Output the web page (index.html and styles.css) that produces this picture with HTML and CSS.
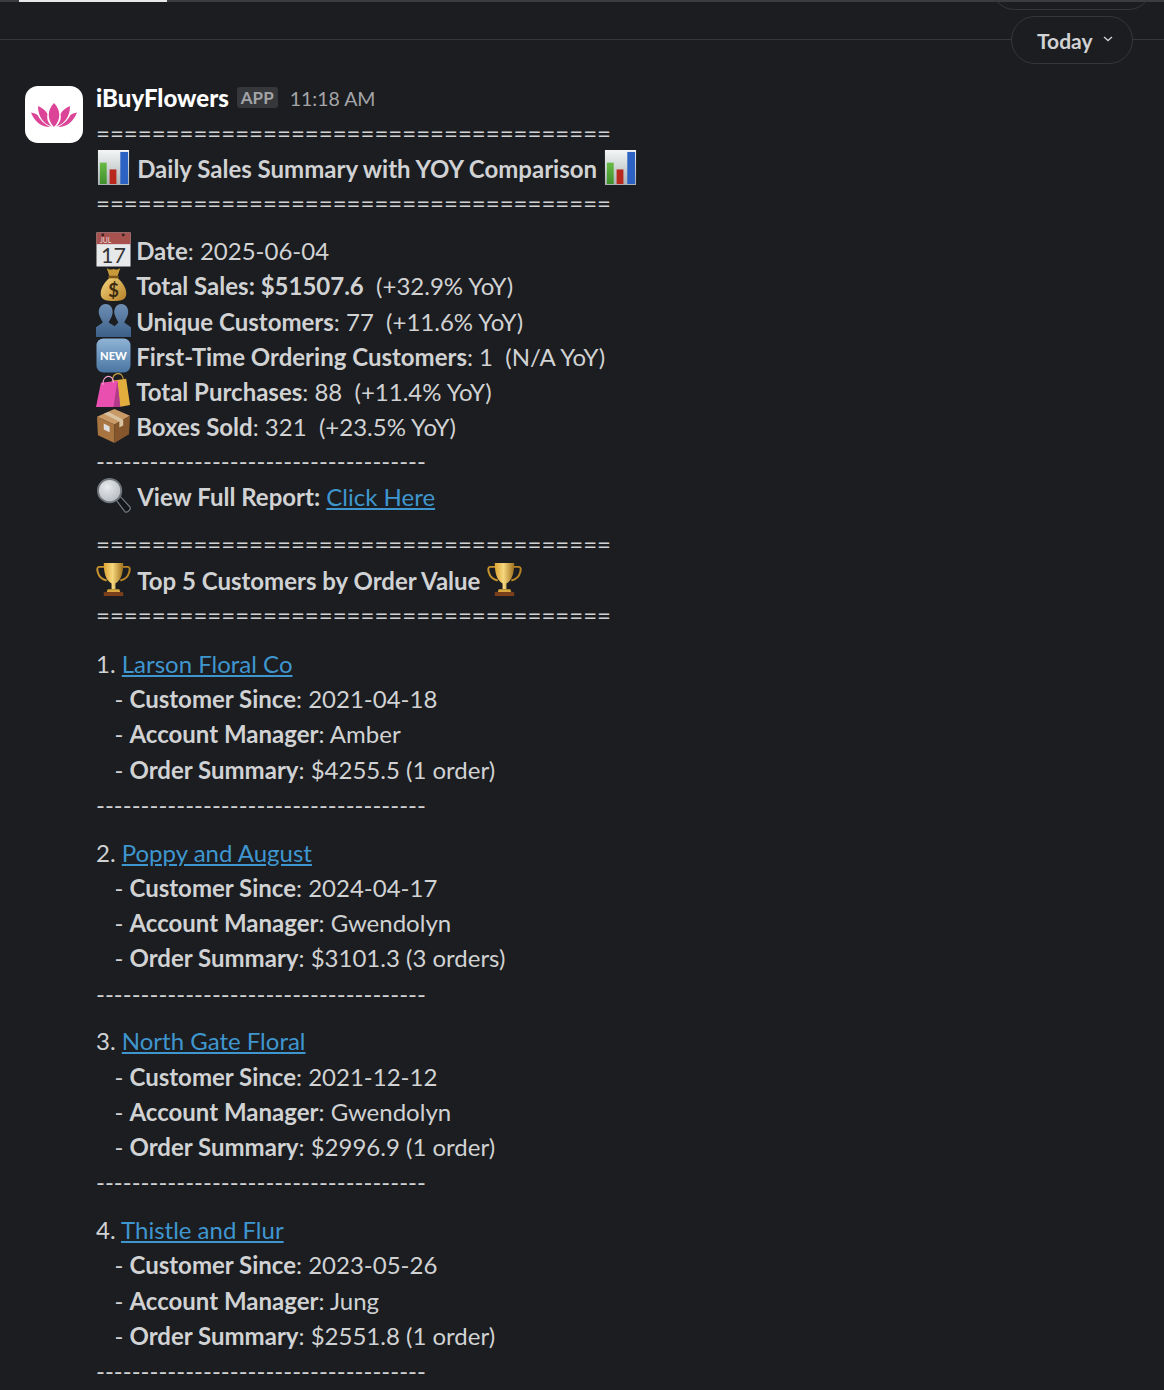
FILE: index.html
```html
<!DOCTYPE html>
<html lang="en">
<head>
    <meta charset="UTF-8">
    <title>iBuyFlowers</title>
    <link rel="stylesheet" href="styles.css">
</head>
<body>
    <svg class="sprites" width="0" height="0" aria-hidden="true">
        <defs>
            <linearGradient id="paper" x1="0" y1="0" x2="0" y2="1"><stop offset="0" stop-color="#f4f6f6"/><stop offset="1" stop-color="#aab2b4"/></linearGradient>
            <linearGradient id="green" x1="0" y1="0" x2="0" y2="1"><stop offset="0" stop-color="#69bb45"/><stop offset="1" stop-color="#3e8f2c"/></linearGradient>
            <linearGradient id="bag" x1="0" y1="0" x2="1" y2="1"><stop offset="0" stop-color="#f4d67e"/><stop offset="1" stop-color="#b57f26"/></linearGradient>
            <linearGradient id="bust" x1="0" y1="0" x2="0" y2="1"><stop offset="0" stop-color="#6f8fb4"/><stop offset="1" stop-color="#3b5f88"/></linearGradient>
            <linearGradient id="newbg" x1="0" y1="0" x2="0" y2="1"><stop offset="0" stop-color="#8fb3d6"/><stop offset="1" stop-color="#4a76a3"/></linearGradient>
            <linearGradient id="cup" x1="0" y1="0" x2="1" y2="0"><stop offset="0" stop-color="#dca534"/><stop offset=".45" stop-color="#f6d77e"/><stop offset="1" stop-color="#a0701c"/></linearGradient>
            <radialGradient id="glass" cx=".4" cy=".35" r=".7"><stop offset="0" stop-color="#e9ebed"/><stop offset="1" stop-color="#b4b9be"/></radialGradient>

            <symbol id="e-chart" viewBox="0 0 36 36">
                <rect x="2" y="0" width="32" height="36" fill="url(#paper)"/>
                <rect x="4" y="13" width="7" height="22" fill="url(#green)"/>
                <rect x="14" y="20" width="7" height="15" fill="#b8281d"/>
                <rect x="25" y="2" width="8" height="33" fill="#2b62c4"/>
            </symbol>
            <symbol id="e-cal" viewBox="0 0 36 36">
                <rect x="0.500" y="0.500" width="35" height="35" fill="#e6e8e9"/>
                <rect x="0.500" y="0.500" width="35" height="12" fill="#a8524f"/>
                <circle cx="7" cy="3" r="1.500" fill="#3a2422"/>
                <circle cx="28" cy="3" r="1.500" fill="#3a2422"/>
                <text x="4" y="11" class="e-cal-month">JUL</text>
                <text x="18" y="32" text-anchor="middle" class="e-cal-day">17</text>
            </symbol>
            <symbol id="e-money" viewBox="0 0 36 36">
                <path d="M11 1c3 2 4 2 7 1 3 1 4 1 7-1l-3 9h-8z" fill="#c99a3a"/>
                <path d="M14 11h8c6 5 10 12 9 18-1 5-6 6-13 6S6 34 5 29c-1-6 3-13 9-18z" fill="url(#bag)"/>
                <rect x="12.500" y="9" width="11" height="2.500" rx="1" fill="#7d5518"/>
                <text x="18" y="31" text-anchor="middle" class="e-dollar">$</text>
            </symbol>
            <symbol id="e-people" viewBox="0 0 36 36">
                <path d="M26 1c5 0 8 5 7 10-1 4-3 7-4 9l7 5v10H18V25l5-5c-1-2-3-5-4-9-1-5 2-10 7-10z" fill="url(#bust)"/>
                <path d="M10 1c5 0 8 5 7 10-1 4-3 7-4 9l8 5v10H0V25l7-5c-1-2-3-5-4-9-1-5 2-10 7-10z" fill="url(#bust)"/>
            </symbol>
            <symbol id="e-new" viewBox="0 0 36 36">
                <rect x="0.500" y="0.500" width="35" height="35" rx="7" fill="url(#newbg)"/>
                <text x="18" y="23" text-anchor="middle" class="e-new-label">NEW</text>
            </symbol>
            <symbol id="e-bags" viewBox="0 0 36 36">
                <path d="M16 8 31 6l4 27-11 2z" fill="#e3ad3d"/>
                <path d="M17 8c0-9 10-10 11-2" fill="none" stroke="#caa23f" stroke-width="1.200"/>
                <path d="M5 10l17-2 3 27H0z" fill="#e84fae"/>
                <path d="M7 12c0-11 11-11 11-2" fill="none" stroke="#f3a6d6" stroke-width="1.200"/>
                <path d="M22 8l3 27-7 0z" fill="#b03a88"/>
            </symbol>
            <symbol id="e-box" viewBox="0 0 36 36">
                <path d="M1 9 19 1l16 7-16 9z" fill="#c99a66"/>
                <path d="M1 9l18 8v19L2 28z" fill="#a87440"/>
                <path d="M19 17l16-9-1 19-15 9z" fill="#85552b"/>
                <path d="M8 6 24 14v6l4-2v-6L13 4z" fill="#d8c2a0"/>
                <path d="M8 16l6 3v6l-6-3z" fill="#dedede"/>
            </symbol>
            <symbol id="e-glass" viewBox="0 0 36 36">
                <path d="M21 23l4-4 10 11c1 2-2 6-5 5z" fill="#14161a" stroke="#7a7f85" stroke-width="1.200"/>
                <circle cx="14" cy="13" r="12" fill="url(#glass)" stroke="#6f757b" stroke-width="2"/>
            </symbol>
            <symbol id="e-cup" viewBox="0 0 36 36">
                <path d="M9 5H3c-2 0-2 3-1 6 1 4 5 7 9 8" fill="none" stroke="#c9952f" stroke-width="2"/>
                <path d="M27 5h6c2 0 2 3 1 6-1 4-5 7-9 8" fill="none" stroke="#b98424" stroke-width="2"/>
                <path d="M8 1h20c0 10-2 18-8 21v6h-4v-6C10 19 8 11 8 1z" fill="url(#cup)"/>
                <path d="M12 28h12l1 3H11z" fill="#d9a83f"/>
                <rect x="8" y="31" width="20" height="4" fill="#7c3f1c"/>
            </symbol>
            <g id="petals">
                <path d="M7 3C12 5 15 8 16.500 11 15.500 16 17 20 21 23.500 12 21 7 13 7 3z"/>
                <path d="M0 9.500C3 10 5 11 6.500 12 9 17 13 21 19 24 10 24 3 18 0 9.500z"/>
            </g>
        </defs>
    </svg>

    <div class="app">
        <div class="tabstrip"><span class="tab-active"></span></div>

        <!-- date dividers -->
        <div class="date-head">
            <span class="pill-prev"></span>
            <div class="date-rule"></div>
            <button class="pill-today">Today
                <svg class="chev" viewBox="0 0 10 6"><path d="M1 1l4 3.600L9 1" fill="none" stroke="currentColor" stroke-width="1.300"/></svg>
            </button>
        </div>

        <div class="message">
            <div class="avatar">
                <svg viewBox="0 0 46 24" width="46" height="24" fill="#dc4597">
                    <path d="M23 0C30 7 30 17 23 24 16 17 16 7 23 0z"/>
                    <use href="#petals"/>
                    <use href="#petals" transform="matrix(-1 0 0 1 46 0)"/>
                </svg>
            </div>
            <div class="body">
                <div class="meta">
                    <span class="sender">iBuyFlowers</span>
                    <span class="badge">APP</span>
                    <span class="time">11:18 AM</span>
                </div>

                <section class="block gap-s">
                    <div class="line">=====================================</div>
                    <div class="line"><svg class="emoji"><use href="#e-chart"/></svg> <b>Daily Sales Summary with YOY Comparison</b> <svg class="emoji"><use href="#e-chart"/></svg></div>
                    <div class="line">=====================================</div>
                </section>

                <section class="block">
                    <div class="line stat"><svg class="emoji"><use href="#e-cal"/></svg> <b>Date</b>: 2025-06-04</div>
                    <div class="line stat"><svg class="emoji"><use href="#e-money"/></svg> <b>Total Sales: $51507.6</b>  (+32.9% YoY)</div>
                    <div class="line stat"><svg class="emoji"><use href="#e-people"/></svg> <b>Unique Customers</b>: 77  (+11.6% YoY)</div>
                    <div class="line stat"><svg class="emoji"><use href="#e-new"/></svg> <b>First-Time Ordering Customers</b>: 1  (N/A YoY)</div>
                    <div class="line stat"><svg class="emoji"><use href="#e-bags"/></svg> <b>Total Purchases</b>: 88  (+11.4% YoY)</div>
                    <div class="line stat"><svg class="emoji"><use href="#e-box"/></svg> <b>Boxes Sold</b>: 321  (+23.5% YoY)</div>
                    <div class="line">-------------------------------------</div>
                    <div class="line"><svg class="emoji"><use href="#e-glass"/></svg> <b>View Full Report:</b> <a href="#">Click Here</a></div>
                </section>

                <section class="block gap-l">
                    <div class="line">=====================================</div>
                    <div class="line"><svg class="emoji"><use href="#e-cup"/></svg> <b>Top 5 Customers by Order Value</b> <svg class="emoji"><use href="#e-cup"/></svg></div>
                    <div class="line">=====================================</div>
                </section>

                <section class="block">
                    <div class="line">1. <a href="#">Larson Floral Co</a></div>
                    <div class="line">   - <b>Customer Since</b>: 2021-04-18</div>
                    <div class="line">   - <b>Account Manager</b>: Amber</div>
                    <div class="line">   - <b>Order Summary</b>: $4255.5 (1 order)</div>
                    <div class="line">-------------------------------------</div>
                </section>

                <section class="block">
                    <div class="line">2. <a href="#">Poppy and August</a></div>
                    <div class="line">   - <b>Customer Since</b>: 2024-04-17</div>
                    <div class="line">   - <b>Account Manager</b>: Gwendolyn</div>
                    <div class="line">   - <b>Order Summary</b>: $3101.3 (3 orders)</div>
                    <div class="line">-------------------------------------</div>
                </section>

                <section class="block">
                    <div class="line">3. <a href="#">North Gate Floral</a></div>
                    <div class="line">   - <b>Customer Since</b>: 2021-12-12</div>
                    <div class="line">   - <b>Account Manager</b>: Gwendolyn</div>
                    <div class="line">   - <b>Order Summary</b>: $2996.9 (1 order)</div>
                    <div class="line">-------------------------------------</div>
                </section>

                <section class="block">
                    <div class="line">4. <a href="#">Thistle and Flur</a></div>
                    <div class="line">   - <b>Customer Since</b>: 2023-05-26</div>
                    <div class="line">   - <b>Account Manager</b>: Jung</div>
                    <div class="line">   - <b>Order Summary</b>: $2551.8 (1 order)</div>
                    <div class="line">-------------------------------------</div>
                </section>
            </div>
        </div>
    </div>
</body>
</html>
```

FILE: styles.css
```css
* {
    margin: 0;
    padding: 0;
    box-sizing: border-box;
}

html, body {
    height: 100%;
    overflow: hidden;
    background: #1b1d21;
}

body {
    font-family: Lato, 'Noto Sans', sans-serif;
    color: #d1d2d3;
}

.sprites {
    position: absolute;
}

.tabstrip {
    height: 2px;
    background: #3a3c40;
    padding-left: 19px;
}

.tab-active {
    display: block;
    width: 148px;
    height: 2px;
    background: #e8e8e8;
}

.date-head {
    position: relative;
    height: 84px;
}

.date-rule {
    position: absolute;
    left: 0;
    right: 0;
    top: 37px;
    border-top: 1px solid #35373b;
}

.pill-prev {
    position: absolute;
    left: 991px;
    top: -39px;
    width: 161px;
    height: 47px;
    border: 1.500px solid #35373b;
    border-radius: 24px;
}

.pill-today {
    position: absolute;
    left: 1011px;
    top: 14px;
    width: 122px;
    height: 48px;
    display: flex;
    align-items: center;
    gap: 11px;
    padding-left: 25px;
    font: 700 21px Lato, sans-serif;
    color: #d1d2d3;
    background: #1b1d21;
    border: 1.500px solid #35373b;
    border-radius: 24px;
}

.chev {
    width: 10px;
    height: 6px;
    margin-top: -2px;
}

.message {
    display: flex;
    gap: 13px;
    padding-left: 25px;
}

.avatar {
    width: 58px;
    height: 57px;
    flex: none;
    display: flex;
    align-items: center;
    justify-content: center;
    background: #fff;
    border-radius: 13px;
}

.meta {
    display: flex;
    align-items: flex-start;
    height: 31.600px;
    margin-top: -3px;
}

.sender {
    font-size: 24px;
    line-height: 30px;
    font-weight: 900;
    color: #fff;
}

.badge {
    margin: 4px 0 0 8px;
    padding: 1px 4px;
    font-size: 17px;
    font-weight: 700;
    line-height: 19px;
    color: #a3a4a6;
    background: #35373b;
    border-radius: 3px;
}

.time {
    margin: 1px 0 0 12px;
    font-size: 19.500px;
    line-height: 30px;
    color: #a5a6a8;
}

.block {
    margin-bottom: 12.800px;
}

.block.gap-s {
    margin-bottom: 12px;
}

.block.gap-l {
    margin-bottom: 14px;
}

.line {
    height: 35.200px;
    line-height: 35.200px;
    font-size: 24px;
    white-space: pre-wrap;
}

.line b {
    font-weight: 700;
}

.line a {
    color: #3f96cf;
}

.emoji {
    width: 35px;
    height: 35px;
    vertical-align: -7px;
}

.stat .emoji {
    margin-right: -1px;
}

.e-cal-month {
    font: 400 7px Lato, sans-serif;
    fill: #f1dcdc;
}

.e-cal-day {
    font: 400 22px Lato, sans-serif;
    fill: #333;
}

.e-dollar {
    font: 700 19px Lato, sans-serif;
    fill: #3d2b10;
}

.e-new-label {
    font: 900 11.500px Lato, sans-serif;
    fill: #fff;
}
```
